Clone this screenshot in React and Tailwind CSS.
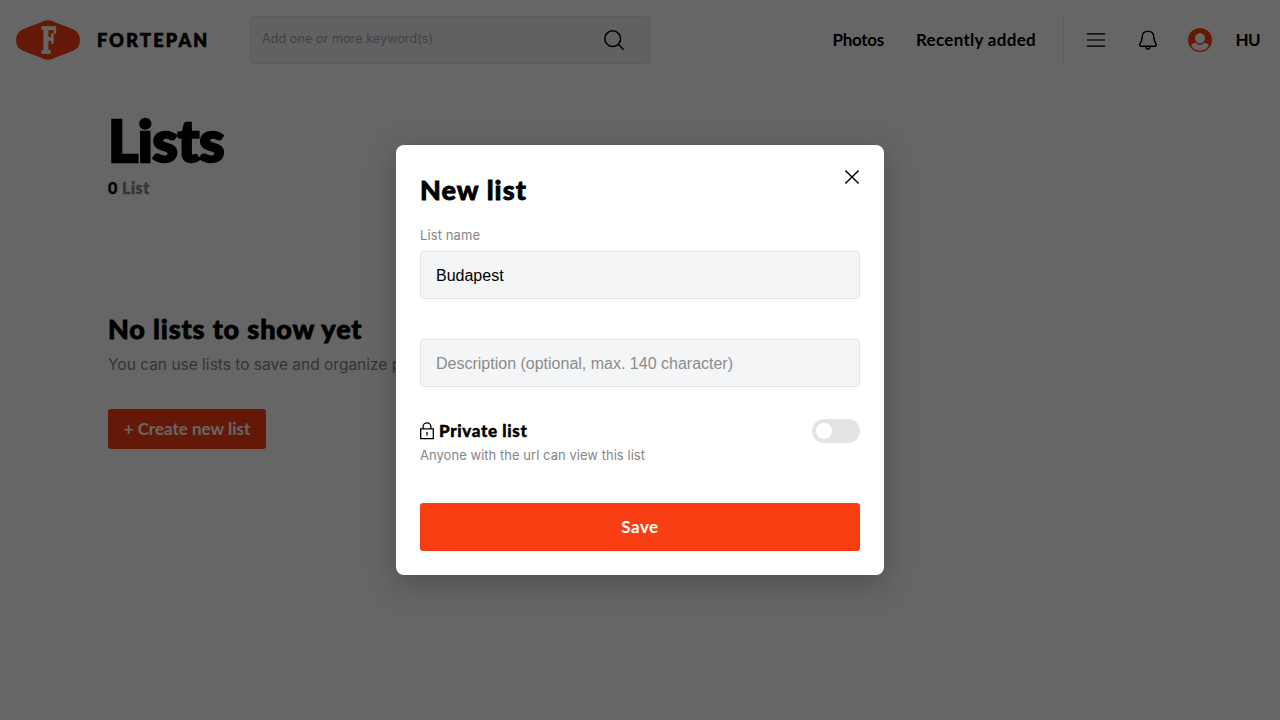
const heading = "font-['Lato',sans-serif] whitespace-nowrap";

function Logo() {
  return (
    <a className="flex h-10 w-[193px] items-center gap-[17px]">
      <svg width="64" height="44" viewBox="0 -2 64 44" className="shrink-0">
        <path d="M27.5 1.2Q32-.9 36.5 1.2L57 9.2Q64 12.2 64 20T57 30.8L36.5 38.8Q32 40.9 27.5 38.8L7 30.8Q0 27.8 0 20T7 9.2Z" fill="#f93e13" />
        <text transform="translate(25 32.6) scale(.6 1)" fontFamily="DejaVu Serif" fontWeight="700" fontSize="35" fill="#fff" stroke="#fff" strokeWidth="1.4">F</text>
      </svg>
      <span className={`${heading} text-[18px] leading-6 font-black tracking-[2.3px] [-webkit-text-stroke:0.7px]`}>FORTEPAN</span>
    </a>
  );
}

function Header() {
  return (
    <header className="flex h-20 items-center pl-4">
      <Logo />
      <div className="ml-[41px] flex h-12 w-[400px] items-center rounded-[4px] border border-[#e4e4ea] bg-[#f3f3f7] pr-[25px] pl-[11px]">
        <span className="grow pb-[2px] font-['Inter',sans-serif] text-[12.5px] tracking-[0.1px] text-[#a5a5a5]">Add one or more keyword(s)</span>
        <svg width="20" height="20" viewBox="0 0 20 20" fill="none" stroke="#000" strokeWidth="1.5" strokeLinecap="round">
          <circle cx="8.7" cy="8.7" r="7.9" />
          <path d="M14.3 14.3L19.2 19.2" />
        </svg>
      </div>
      <nav className={`${heading} ml-auto flex h-12 items-center border-r border-[#e6e6e6] pr-[27px] text-[17px] font-bold`}>
        <a className="mr-8 tracking-[-0.3px]">Photos</a>
        <a className="tracking-[0.3px]">Recently added</a>
      </nav>
      <div className="flex w-[216px] items-center">
        <svg width="18" height="16" viewBox="0 0 18 16" className="ml-[23px]" stroke="#333" strokeWidth="1.7">
          <path d="M0 1.8H18M0 8H18M0 14.2H18" />
        </svg>
        <svg width="20" height="22" viewBox="0 0 20 22" className="ml-[33px]" fill="none" stroke="#000" strokeWidth="1.5" strokeLinejoin="round">
          <path d="M10 2.2C6.4 2.2 4.1 4.7 4.1 8.2C4.1 12 3.2 12.9 2.1 14.6C1.2 16 1.7 17.3 3.2 17.3H16.8C18.3 17.3 18.8 16 17.9 14.6C16.8 12.9 15.9 12 15.9 8.2C15.9 4.7 13.6 2.2 10 2.2Z" />
          <path d="M8.2 17.5V18.3A1.8 1.8 0 0 0 11.8 18.3V17.5" />
        </svg>
        <svg width="24" height="24" viewBox="0 0 24 24" className="ml-[30px]">
          <circle cx="12" cy="12" r="12" fill="#f93e13" />
          <path d="M3 17.4Q5.2 14.8 8 14.5H16Q18.8 14.8 21 17.4A10.5 10.5 0 0 1 3 17.4Z" fill="#fff" />
          <circle cx="12" cy="10.2" r="5.8" fill="#fff" stroke="#f93e13" strokeWidth="1.3" />
        </svg>
        <span className={`${heading} ml-[23.5px] text-[17px] font-bold tracking-[-0.6px]`}>HU</span>
      </div>
    </header>
  );
}

function Page() {
  return (
    <div className="flex h-[720px] flex-col bg-white">
      <Header />
      <main className="flex flex-col items-start pl-[108px]">
        <h1 className={`${heading} mt-7 text-[58px] leading-[64px] font-black tracking-[-0.5px] [-webkit-text-stroke:2.4px]`}>Lists</h1>
        <p className={`${heading} mt-1 text-base leading-6 font-black tracking-[0.5px] text-[#858585] [-webkit-text-stroke:0.4px]`}>
          <span className="text-black">0</span> List
        </p>
        <h2 className={`${heading} mt-[113px] text-[27px] leading-8 font-black tracking-[0.87px] [-webkit-text-stroke:0.8px]`}>No lists to show yet</h2>
        <p className="mt-2 font-['Inter',sans-serif] text-[15.5px] leading-6 whitespace-nowrap text-[#858585]">
          You can use lists to save and organize photos.
        </p>
        <button className={`${heading} mt-8 h-10 w-[158px] rounded-[3px] bg-[#f93e13] text-[17px] font-bold text-white`}>+ Create new list</button>
      </main>
    </div>
  );
}

function NewListDialog() {
  return (
    <div role="dialog" className="flex h-[430px] w-[488px] flex-col rounded-lg bg-white px-6 shadow-[0_8px_32px_rgba(0,0,0,0.25)]">
      <div className="flex h-[77px] items-start justify-between">
        <h2 className={`${heading} mt-[29px] text-[27px] leading-8 font-black tracking-[1.05px] [-webkit-text-stroke:0.8px]`}>New list</h2>
        <svg width="16" height="16" viewBox="0 0 16 16" className="mt-6" stroke="#000" strokeWidth="1.4">
          <path d="M1.4 1.4L14.6 14.6M14.6 1.4L1.4 14.6" />
        </svg>
      </div>
      <label className="mt-[3px] h-[26px] font-['Inter',sans-serif] text-[13px] leading-5 tracking-[0.1px] text-[#858585]">List name</label>
      <div className="flex h-12 items-center rounded-[3px] border border-[#e4e5e7] bg-[#f4f5f7] pt-[2px] pl-[15px] font-['Liberation_Sans',sans-serif] text-base text-black">Budapest</div>
      <div className="mt-10 flex h-12 items-center rounded-[3px] border border-[#e4e5e7] bg-[#f4f5f7] pt-[2px] pl-[15px] font-['Liberation_Sans',sans-serif] text-base text-[#8c8c8c]">
        Description (optional, max. 140 character)
      </div>
      <div className="mt-8 flex h-6 items-center">
        <svg width="14" height="18" viewBox="0 0 14 18" fill="none" stroke="#000" strokeWidth="1.3">
          <path d="M.7 6.8H13.3V16.7H.7ZM3.1 6.8V4.8A3.9 3.9 0 0 1 10.9 4.8V6.8M7 10V13.6" />
        </svg>
        <span className={`${heading} ml-[5px] text-[17px] font-black tracking-[0.63px] [-webkit-text-stroke:0.4px]`}>Private list</span>
        <span className="ml-auto flex h-6 w-12 items-center rounded-full bg-[#e4e4e4] pl-1">
          <span className="size-4 rounded-full bg-white" />
        </span>
      </div>
      <p className="mt-[2px] font-['Inter',sans-serif] text-[13px] leading-5 tracking-[0.035px] text-[#858585]">Anyone with the url can view this list</p>
      <button className={`${heading} mt-[38px] h-12 w-full rounded-[3px] bg-[#f93e13] text-[17px] font-bold tracking-[0.5px] text-white`}>Save</button>
    </div>
  );
}

export default function App() {
  return (
    <div className="relative h-[720px] w-full overflow-hidden text-black">
      <Page />
      <div className="absolute inset-0 flex items-center justify-center bg-black/60">
        <NewListDialog />
      </div>
    </div>
  );
}
